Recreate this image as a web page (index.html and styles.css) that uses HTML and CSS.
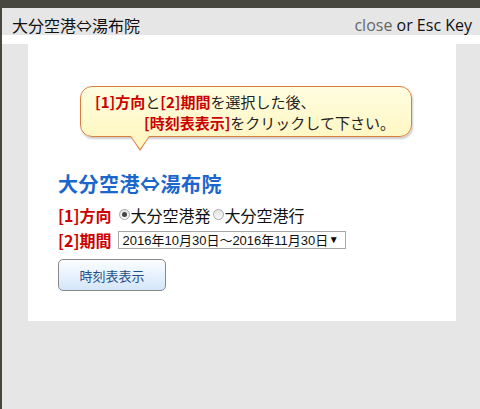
FILE: index.html
```html
<!DOCTYPE html>
<html lang="ja">
<head>
    <meta charset="UTF-8">
    <title>大分空港⇔湯布院</title>
    <link rel="stylesheet" href="styles.css">
</head>
<body>
    <div class="modal-header">
        <span class="modal-title">大分空港⇔湯布院</span>
        <span class="modal-close"><span class="close-link">close</span> or Esc Key</span>
    </div>
    <div class="modal-body">
        <div class="frame-top"></div>
        <div class="panel">
            <div class="bubble">
                <div class="bubble-line"><b>[1]方向</b>と<b>[2]期間</b>を選択した後、</div>
                <div class="bubble-line indent"><b>[時刻表表示]</b>をクリックして下さい。</div>
            </div>
            <h2 class="route-title">大分空港⇔湯布院</h2>
            <div class="form-row">
                <span class="form-label">[1]方向</span>
                <label class="radio"><input type="radio" name="dir" checked>大分空港発</label>
                <label class="radio"><input type="radio" name="dir">大分空港行</label>
            </div>
            <div class="form-row">
                <span class="form-label">[2]期間</span>
                <div class="select-box">2016年10月30日～2016年11月30日<span class="arrow">▼</span></div>
            </div>
            <button class="show-btn">時刻表表示</button>
        </div>
    </div>
</body>
</html>
```
FILE: styles.css
```css
body {
    margin: 0;
    height: 401px;
    background-color: #e6e6e6;
    border-top: 8px solid #47463f;
    border-left: 2px solid #47463f;
    font-family: "Noto Sans CJK JP", sans-serif;
    color: #111;
}
.modal-header {
    height: 27px;
    display: flex;
    justify-content: space-between;
    align-items: center;
    padding: 0 8px 0 10px;
    font-size: 16px;
    line-height: 20px;
}
.modal-title {
    padding-top: 6px;
}
.modal-close {
    font-family: "Open Sans", sans-serif;
    padding-top: 6px;
}
.close-link {
    color: #666;
}
.frame-top {
    height: 9px;
    background-color: #fff;
}
.panel {
    margin: 0 24px 0 26px;
    height: 277px;
    box-sizing: border-box;
    background-color: #fff;
    padding: 42px 0 0 30px;
}
.bubble {
    position: relative;
    width: 332px;
    height: 51px;
    box-sizing: border-box;
    margin-left: 22px;
    margin-bottom: 34px;
    padding: 4px 0 0 14px;
    border: 1px solid #d98040;
    border-radius: 12px;
    background: linear-gradient(#fffde0, #fff7c4);
    box-shadow: 1px 2px 2px rgba(0, 0, 0, 0.2);
    font-size: 15px;
    line-height: 21px;
    color: #222;
}
.bubble::before {
    content: "";
    position: absolute;
    top: 100%;
    left: 49px;
    border-top: 15px solid #d98040;
    border-left: 10px solid transparent;
    border-right: 10px solid transparent;
}
.bubble::after {
    content: "";
    position: absolute;
    top: 100%;
    left: 50px;
    border-top: 13px solid #fff7c4;
    border-left: 9px solid transparent;
    border-right: 9px solid transparent;
}
.bubble b {
    color: #cc0000;
}
.bubble-line.indent {
    padding-left: 49px;
}
.route-title {
    margin: 0 0 5px;
    font-size: 20px;
    line-height: 26px;
    color: #1a66cc;
    letter-spacing: 0.5px;
}
.form-row {
    height: 25px;
    display: flex;
    align-items: center;
    font-size: 16px;
}
.form-label {
    color: #cc0000;
    font-weight: bold;
    margin-right: 5px;
}
.radio {
    display: flex;
    align-items: center;
}
.radio input {
    appearance: none;
    -webkit-appearance: none;
    width: 11px;
    height: 11px;
    box-sizing: border-box;
    margin: 0 1px 0 2px;
    border: 1px solid #a8a8a8;
    border-radius: 50%;
    background: linear-gradient(#e4e4e4, #f8f8f8);
    display: flex;
    align-items: center;
    justify-content: center;
}
.radio input:checked::after {
    content: "";
    width: 5px;
    height: 5px;
    border-radius: 50%;
    background-color: #444;
}
.select-box {
    width: 228px;
    height: 18px;
    box-sizing: border-box;
    display: flex;
    align-items: center;
    justify-content: space-between;
    padding: 0 6px 0 4px;
    border: 1px solid #a9a9a9;
    font-family: "Liberation Sans", "Noto Sans CJK JP", sans-serif;
    font-size: 13px;
    margin-left: 1px;
}
.arrow {
    font-size: 10px;
    color: #000;
}
.show-btn {
    margin-top: 7px;
    width: 108px;
    height: 32px;
    border: 1px solid #888;
    border-radius: 5px;
    background: linear-gradient(#fbfdff, #d4e6fa);
    font-family: "Noto Sans CJK JP", sans-serif;
    font-size: 13px;
    color: #1f4f8a;
}
```
